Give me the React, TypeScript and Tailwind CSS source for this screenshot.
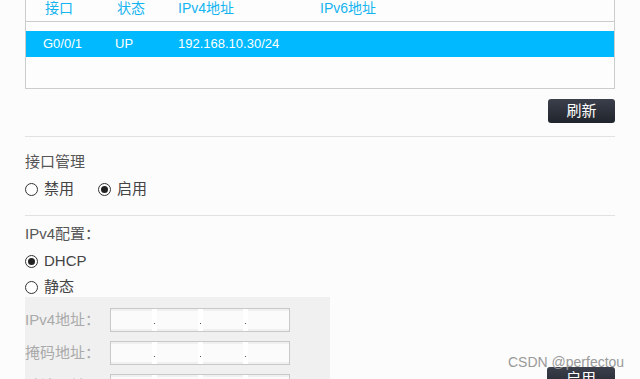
import React from "react";

const font = { fontFamily: '"Liberation Sans", "Noto Sans CJK SC", sans-serif' };

function Radio({ checked, label, className = "" }: { checked?: boolean; label: string; className?: string }) {
  return (
    <div className={"flex items-center h-[20px] " + className}>
      <span className="w-[13px] h-[13px] rounded-full border border-[#333] flex items-center justify-center bg-white">
        {checked && <span className="w-[7px] h-[7px] rounded-full bg-[#222]" />}
      </span>
      <span className="ml-[6px] text-[15px] text-[#444] leading-[20px]">{label}</span>
    </div>
  );
}

function IpInput() {
  return (
    <div className="w-[180px] h-[24px] border border-[#c8c8c8] bg-[#f0f0f0] flex py-[2px]">
      <div className="flex-1 bg-[#fbfbfb]" />
      <div className="w-[5px] -my-[2px] bg-white flex items-end justify-center pb-[7px]">
        <span className="w-[1px] h-[1px] bg-[#555]" />
      </div>
      <div className="flex-1 bg-[#fbfbfb]" />
      <div className="w-[5px] -my-[2px] bg-white flex items-end justify-center pb-[7px]">
        <span className="w-[1px] h-[1px] bg-[#555]" />
      </div>
      <div className="flex-1 bg-[#fbfbfb]" />
      <div className="w-[5px] -my-[2px] bg-white flex items-end justify-center pb-[7px]">
        <span className="w-[1px] h-[1px] bg-[#555]" />
      </div>
      <div className="flex-1 bg-[#fbfbfb]" />
    </div>
  );
}

export default function App() {
  return (
    <div className="relative w-[640px] h-[379px] overflow-hidden bg-[#fcfcfc]" style={font}>
      <div className="ml-[25px] w-[590px] flex flex-col">
        {/* table */}
        <div className="h-[89px] border-l border-r border-b border-[#cccccc] bg-[#fdfdfd] flex flex-col">
          <div className="h-[22px] border-b border-[#cccccc] flex items-start text-[14px] leading-[16px] text-[#14b4f0]">
            <div className="w-[91px] pl-[19px]">接口</div>
            <div className="w-[61px]">状态</div>
            <div className="w-[142px]">IPv4地址</div>
            <div>IPv6地址</div>
          </div>
          <div className="mt-[9px] h-[26px] bg-[#00b9ff] flex items-center text-[13px] text-white">
            <div className="w-[89px] pl-[17px]">G0/0/1</div>
            <div className="w-[63px]">UP</div>
            <div className="w-[142px]">192.168.10.30/24</div>
          </div>
        </div>
        <div className="mt-[10px] flex justify-end">
          <button className="w-[67px] h-[24px] rounded-[3px] bg-gradient-to-b from-[#3b404c] to-[#20242c] text-white text-[15px] leading-[24px]">
            刷新
          </button>
        </div>
        <div className="mt-[13px] h-[1px] bg-[#e2e2e2]" />
        <div className="mt-[15px] h-[20px] leading-[20px] text-[15px] text-[#555]">接口管理</div>
        <div className="mt-[7px] flex">
          <Radio label="禁用" />
          <Radio label="启用" checked className="ml-[24px]" />
        </div>
        <div className="mt-[16px] h-[1px] bg-[#e2e2e2]" />
        <div className="mt-[8px] h-[20px] leading-[20px] text-[15px] text-[#555]">IPv4配置：</div>
        <Radio label="DHCP" checked className="mt-[7px]" />
        <Radio label="静态" className="mt-[6px]" />
        <div className="flex">
          <div className="w-[305px] h-[100px] bg-[#f0f0f0] pt-[11px] flex flex-col gap-[9px]">
            <div className="flex items-center">
              <div className="w-[85px] text-[15px] text-[#aaa]">IPv4地址：</div>
              <IpInput />
            </div>
            <div className="flex items-center">
              <div className="w-[85px] text-[15px] text-[#aaa]">掩码地址：</div>
              <IpInput />
            </div>
            <div className="flex items-center">
              <div className="w-[85px] text-[15px] text-[#aaa]">默认网关：</div>
              <IpInput />
            </div>
          </div>
          <div className="flex-1 flex justify-end items-start">
            <button className="mt-[70px] w-[68px] h-[24px] rounded-[3px] bg-gradient-to-b from-[#3b404c] to-[#20242c] text-white text-[15px] leading-[24px]">
              启用
            </button>
          </div>
        </div>
      </div>
      <div className="absolute left-[508px] top-[354px] text-[14px] leading-[16px] text-[#9a9a9a]">
        CSDN @perfectou
      </div>
    </div>
  );
}
